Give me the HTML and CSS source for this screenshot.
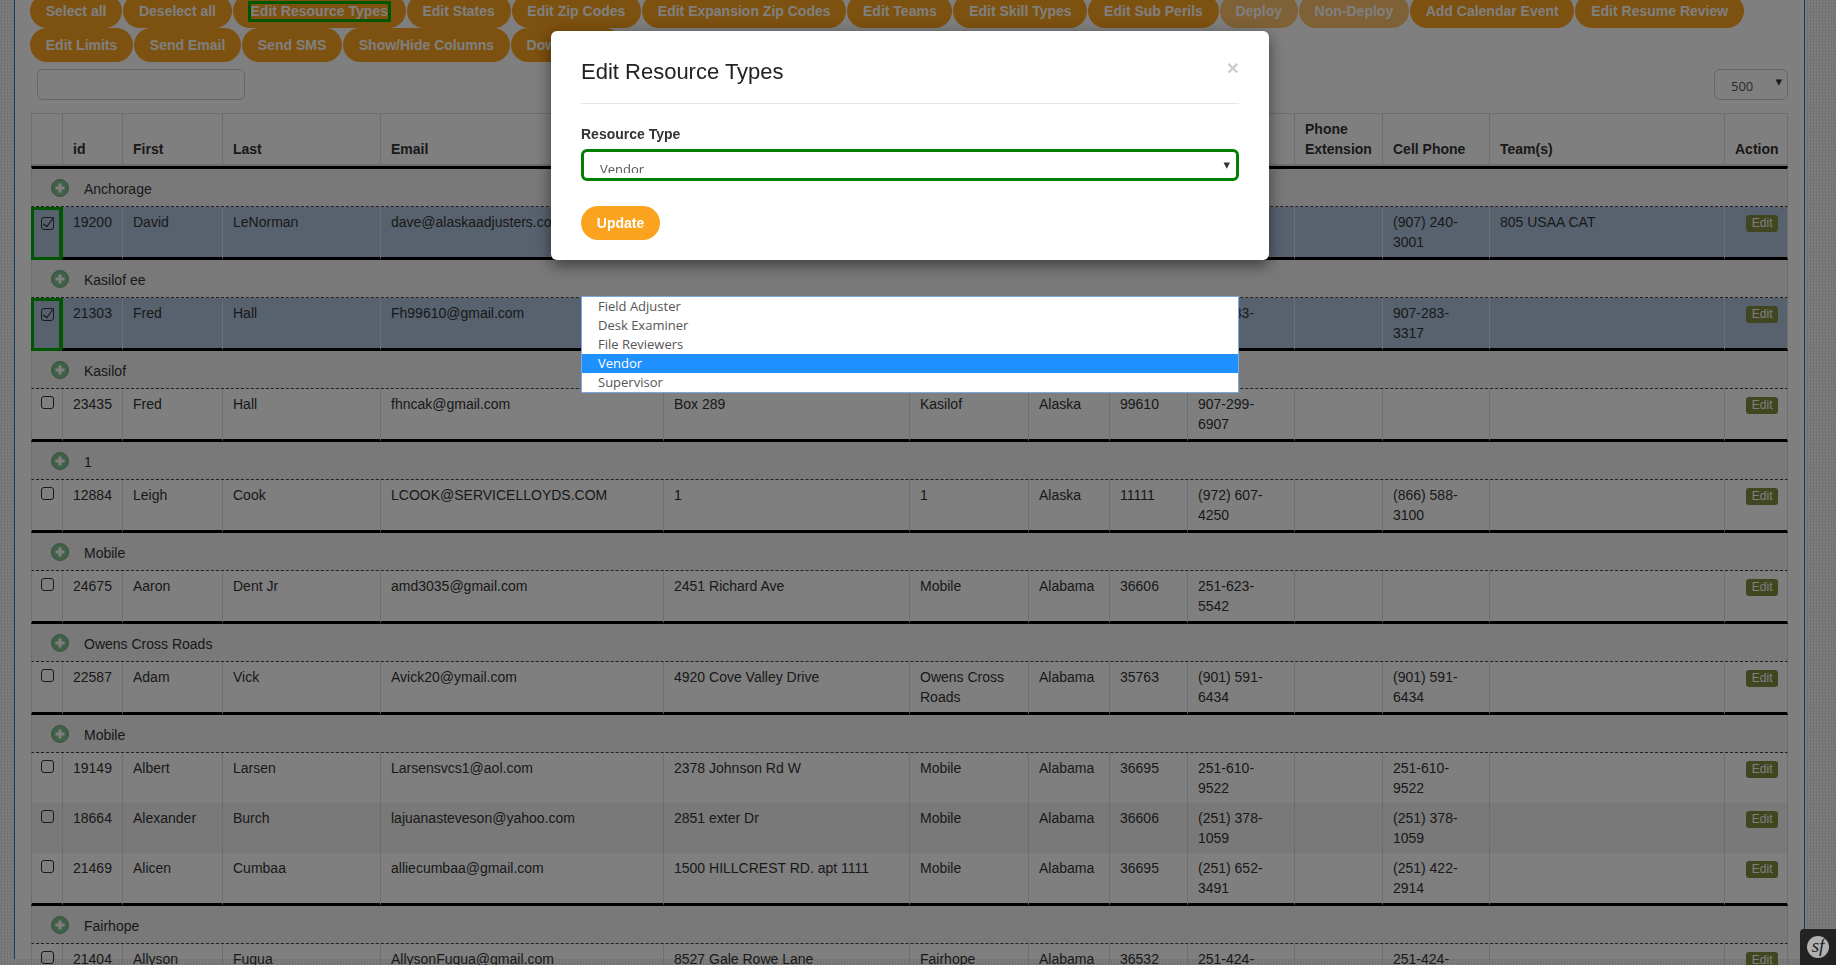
FILE: index.html
```html
<!DOCTYPE html>
<html lang="en">
<head>
    <meta charset="UTF-8">
    <meta name="viewport" content="width=device-width, initial-scale=1.0">
    <title>Resources</title>
    <link rel="stylesheet" href="styles.css">
</head>
<body>
<div class="page">
    <div class="btn-row first">
        <a class="pill">Select all</a>
        <a class="pill">Deselect all</a>
        <a class="pill"><span class="focused">Edit Resource Types</span></a>
        <a class="pill">Edit States</a>
        <a class="pill">Edit Zip Codes</a>
        <a class="pill">Edit Expansion Zip Codes</a>
        <a class="pill">Edit Teams</a>
        <a class="pill">Edit Skill Types</a>
        <a class="pill">Edit Sub Perils</a>
        <a class="pill disabled">Deploy</a>
        <a class="pill disabled">Non-Deploy</a>
        <a class="pill">Add Calendar Event</a>
        <a class="pill">Edit Resume Review</a>
    </div>
    <div class="btn-row">
        <a class="pill">Edit Limits</a>
        <a class="pill">Send Email</a>
        <a class="pill">Send SMS</a>
        <a class="pill">Show/Hide Columns</a>
        <a class="pill wide">Download</a>
    </div>

    <div class="filters">
        <input class="search" type="text">
        <div class="page-size">500<span class="arrow">&#9662;</span></div>
    </div>

    <table class="resources">
        <colgroup>
            <col class="c-check"><col class="c-id"><col class="c-first"><col class="c-last"><col class="c-email">
            <col class="c-address"><col class="c-city"><col class="c-state"><col class="c-zip"><col class="c-phone">
            <col class="c-ext"><col class="c-cell"><col class="c-teams"><col class="c-action">
        </colgroup>
        <thead>
            <tr>
                <th></th><th>id</th><th>First</th><th>Last</th><th>Email</th>
                <th>Address</th><th>City</th><th>State</th><th>Zip</th><th>Phone</th>
                <th>Phone Extension</th><th>Cell Phone</th><th>Team(s)</th><th>Action</th>
            </tr>
        </thead>
        <tbody>
            <tr class="group">
                <td colspan="14"><svg class="plus" viewBox="0 0 18 18"><circle cx="9" cy="9" r="8.5"/><path d="M9 4.5v9M4.5 9h9"/></svg>Anchorage</td>
            </tr>
            <tr class="end picked">
                <td class="check"><input class="pick" type="checkbox" checked></td>
                <td>19200</td><td>David</td><td>LeNorman</td><td>dave@alaskaadjusters.com</td>
                <td></td><td></td><td></td><td></td><td></td><td></td>
                <td>(907) 240-3001</td><td>805 USAA CAT</td><td class="action"><a class="edit">Edit</a></td>
            </tr>

            <tr class="group">
                <td colspan="14"><svg class="plus" viewBox="0 0 18 18"><circle cx="9" cy="9" r="8.5"/><path d="M9 4.5v9M4.5 9h9"/></svg>Kasilof ee</td>
            </tr>
            <tr class="end picked">
                <td class="check"><input class="pick" type="checkbox" checked></td>
                <td>21303</td><td>Fred</td><td>Hall</td><td>Fh99610@gmail.com</td>
                <td></td><td></td><td></td><td></td><td>907-283-3317</td><td></td>
                <td>907-283-3317</td><td></td><td class="action"><a class="edit">Edit</a></td>
            </tr>

            <tr class="group">
                <td colspan="14"><svg class="plus" viewBox="0 0 18 18"><circle cx="9" cy="9" r="8.5"/><path d="M9 4.5v9M4.5 9h9"/></svg>Kasilof</td>
            </tr>
            <tr class="end">
                <td class="check"><input class="pick" type="checkbox"></td>
                <td>23435</td><td>Fred</td><td>Hall</td><td>fhncak@gmail.com</td>
                <td>Box 289</td><td>Kasilof</td><td>Alaska</td><td>99610</td><td>907-299-6907</td><td></td>
                <td></td><td></td><td class="action"><a class="edit">Edit</a></td>
            </tr>

            <tr class="group">
                <td colspan="14"><svg class="plus" viewBox="0 0 18 18"><circle cx="9" cy="9" r="8.5"/><path d="M9 4.5v9M4.5 9h9"/></svg>1</td>
            </tr>
            <tr class="end">
                <td class="check"><input class="pick" type="checkbox"></td>
                <td>12884</td><td>Leigh</td><td>Cook</td><td>LCOOK@SERVICELLOYDS.COM</td>
                <td>1</td><td>1</td><td>Alaska</td><td>11111</td><td>(972) 607-4250</td><td></td>
                <td>(866) 588-3100</td><td></td><td class="action"><a class="edit">Edit</a></td>
            </tr>

            <tr class="group">
                <td colspan="14"><svg class="plus" viewBox="0 0 18 18"><circle cx="9" cy="9" r="8.5"/><path d="M9 4.5v9M4.5 9h9"/></svg>Mobile</td>
            </tr>
            <tr class="end">
                <td class="check"><input class="pick" type="checkbox"></td>
                <td>24675</td><td>Aaron</td><td>Dent Jr</td><td>amd3035@gmail.com</td>
                <td>2451 Richard Ave</td><td>Mobile</td><td>Alabama</td><td>36606</td><td>251-623-5542</td><td></td>
                <td></td><td></td><td class="action"><a class="edit">Edit</a></td>
            </tr>

            <tr class="group">
                <td colspan="14"><svg class="plus" viewBox="0 0 18 18"><circle cx="9" cy="9" r="8.5"/><path d="M9 4.5v9M4.5 9h9"/></svg>Owens Cross Roads</td>
            </tr>
            <tr class="end">
                <td class="check"><input class="pick" type="checkbox"></td>
                <td>22587</td><td>Adam</td><td>Vick</td><td>Avick20@ymail.com</td>
                <td>4920 Cove Valley Drive</td><td>Owens Cross Roads</td><td>Alabama</td><td>35763</td><td>(901) 591-6434</td><td></td>
                <td>(901) 591-6434</td><td></td><td class="action"><a class="edit">Edit</a></td>
            </tr>

            <tr class="group">
                <td colspan="14"><svg class="plus" viewBox="0 0 18 18"><circle cx="9" cy="9" r="8.5"/><path d="M9 4.5v9M4.5 9h9"/></svg>Mobile</td>
            </tr>
            <tr>
                <td class="check"><input class="pick" type="checkbox"></td>
                <td>19149</td><td>Albert</td><td>Larsen</td><td>Larsensvcs1@aol.com</td>
                <td>2378 Johnson Rd W</td><td>Mobile</td><td>Alabama</td><td>36695</td><td>251-610-9522</td><td></td>
                <td>251-610-9522</td><td></td><td class="action"><a class="edit">Edit</a></td>
            </tr>
            <tr>
                <td class="check"><input class="pick" type="checkbox"></td>
                <td>18664</td><td>Alexander</td><td>Burch</td><td>lajuanasteveson@yahoo.com</td>
                <td>2851 exter Dr</td><td>Mobile</td><td>Alabama</td><td>36606</td><td>(251) 378-1059</td><td></td>
                <td>(251) 378-1059</td><td></td><td class="action"><a class="edit">Edit</a></td>
            </tr>
            <tr class="end">
                <td class="check"><input class="pick" type="checkbox"></td>
                <td>21469</td><td>Alicen</td><td>Cumbaa</td><td>alliecumbaa@gmail.com</td>
                <td>1500 HILLCREST RD. apt 1111</td><td>Mobile</td><td>Alabama</td><td>36695</td><td>(251) 652-3491</td><td></td>
                <td>(251) 422-2914</td><td></td><td class="action"><a class="edit">Edit</a></td>
            </tr>

            <tr class="group">
                <td colspan="14"><svg class="plus" viewBox="0 0 18 18"><circle cx="9" cy="9" r="8.5"/><path d="M9 4.5v9M4.5 9h9"/></svg>Fairhope</td>
            </tr>
            <tr class="end">
                <td class="check"><input class="pick" type="checkbox"></td>
                <td>21404</td><td>Allyson</td><td>Fugua</td><td>AllysonFugua@gmail.com</td>
                <td>8527 Gale Rowe Lane</td><td>Fairhope</td><td>Alabama</td><td>36532</td><td>251-424-0000</td><td></td>
                <td>251-424-0000</td><td></td><td class="action"><a class="edit">Edit</a></td>
            </tr>
        </tbody>
    </table>
</div>

<div class="backdrop"></div>

<div class="modal">
    <div class="modal-head">
        <h4>Edit Resource Types</h4>
        <span class="close">&times;</span>
    </div>
    <label class="field-label">Resource Type</label>
    <div class="fake-select">
        <span class="fake-value">Vendor</span>
        <span class="arrow">&#9662;</span>
    </div>
    <button class="update" type="button">Update</button>
</div>

<ul class="dropdown">
    <li>Field Adjuster</li>
    <li>Desk Examiner</li>
    <li>File Reviewers</li>
    <li class="active">Vendor</li>
    <li>Supervisor</li>
</ul>

<div class="sf-toolbar"><span class="sf-logo">sf</span></div>
</body>
</html>
```

FILE: styles.css
```css
html, body {
    height: 100%;
    overflow: hidden;
}

body {
    margin: 0;
    padding: 0 31px 0 14px;
    box-sizing: border-box;
    height: 965px;
    font-family: "Liberation Sans", Arial, sans-serif;
    font-size: 14px;
    line-height: 20px;
    color: #333;
    background-color: #f6f6f6;
    background-image: repeating-conic-gradient(#e4e4e4 0 25%, #ffffff 0 50%);
    background-size: 3px 3px;
}

.page {
    height: 965px;
    padding: 0 16px;
    background-color: #fff;
    border-left: 1px solid #337ab7;
    border-right: 1px solid #337ab7;
}

/* toolbar buttons */
.btn-row {
    display: flex;
    gap: 1px;
    margin-left: -1px;
    white-space: nowrap;
}

.btn-row.first {
    margin-top: -6px;
}

.pill {
    display: block;
    height: 34px;
    line-height: 34px;
    padding: 0 15.75px;
    border-radius: 17px;
    background-color: #fba31f;
    color: #fff;
    font-weight: bold;
}

.pill.disabled {
    opacity: 0.65;
}

.pill.wide {
    padding-right: 29px;
}

.focused {
    display: inline-block;
    margin: 0 2px;
    padding-bottom: 1px;
    line-height: 14px;
    outline: 3px solid #00aa00;
}

.filters {
    display: flex;
    justify-content: space-between;
    margin-top: 7px;
    padding-left: 6px;
}

.search {
    width: 208px;
    height: 31px;
    box-sizing: border-box;
    border: 1px solid #ccc;
    border-radius: 6px;
    background: none;
}

.page-size {
    width: 74px;
    height: 31px;
    box-sizing: border-box;
    padding: 6px 0 0 16px;
    border: 1px solid #ccc;
    border-radius: 6px;
    font-family: "Open Sans", sans-serif;
    font-size: 13px;
    color: #555;
    display: flex;
    justify-content: space-between;
}

.arrow {
    font-family: "DejaVu Sans", sans-serif;
    font-size: 13px;
    line-height: 13px;
    margin: -1px 5px 0 0;
    color: #333;
}

/* table */
.resources {
    table-layout: fixed;
    width: 1757px;
    margin-top: 13px;
    border-collapse: separate;
    border-spacing: 0;
}

.c-check { width: 31px; }
.c-id { width: 60px; }
.c-first { width: 100px; }
.c-last { width: 158px; }
.c-email { width: 283px; }
.c-address { width: 246px; }
.c-city { width: 119px; }
.c-state { width: 81px; }
.c-zip { width: 78px; }
.c-phone { width: 107px; }
.c-ext { width: 88px; }
.c-cell { width: 107px; }
.c-teams { width: 235px; }
.c-action { width: 64px; }

.resources th {
    padding: 5px 10px;
    text-align: left;
    vertical-align: bottom;
    border-top: 1px solid #ddd;
    border-left: 1px solid #ddd;
    border-bottom: 2px solid #ddd;
}

.resources th:last-child {
    border-right: 1px solid #ddd;
}

.resources td {
    padding: 5px 10px;
    vertical-align: top;
    border-left: 1px solid #ddd;
}

.resources td:last-child {
    border-right: 1px solid #ddd;
}

.resources tbody tr:nth-child(odd) td {
    background-color: #f2f2f2;
}

.resources tbody tr:first-child td {
    border-top: 3px solid #000;
}

.resources tbody tr.group td {
    padding: 10px 10px 7px 18px;
    border-bottom: 1px dashed #444;
}

.resources tr.end td {
    border-bottom: 3px solid #000;
}

.resources tr.picked td {
    background-color: #b0c4de;
}

.resources tr.picked .check {
    outline: 3px solid #00aa00;
    outline-offset: -3px;
}

.resources tr.picked .check + td {
    border-left-color: #00aa00;
}

.plus {
    width: 18px;
    height: 18px;
    margin: -4px 15px 0 1px;
    vertical-align: middle;
}

.plus circle {
    fill: #80c090;
    stroke: #70a080;
}

.plus path {
    stroke: #fff;
    stroke-width: 3;
    fill: none;
}

.resources td.check {
    padding-left: 9px;
}

.pick {
    appearance: none;
    position: relative;
    display: block;
    width: 13px;
    height: 13px;
    margin: 2px 0 0 0;
    border: 1px solid #333;
    border-radius: 3px;
    background: none;
}

.pick:checked {
    margin-top: 5px;
}

.pick:checked::after {
    content: "";
    position: absolute;
    left: 4px;
    top: -3px;
    width: 4px;
    height: 11px;
    border-right: 1.5px solid #222;
    border-bottom: 1.5px solid #222;
    transform: rotate(36deg);
}

.resources td.action {
    text-align: right;
    padding-right: 9px;
}

.edit {
    display: inline-block;
    margin-top: 3px;
    padding: 0 5.5px;
    height: 17px;
    line-height: 17px;
    font-size: 12px;
    border-radius: 3px;
    background-color: #808c3e;
    color: #fff;
}

/* modal */
.backdrop {
    position: fixed;
    top: 0;
    left: 0;
    right: 0;
    bottom: 0;
    background-color: rgba(0, 0, 0, 0.5);
}

.modal {
    position: absolute;
    left: 551px;
    top: 31px;
    width: 718px;
    height: 229px;
    box-sizing: border-box;
    padding: 0 30px;
    background-color: #fff;
    border-radius: 6px;
    box-shadow: 0 5px 15px rgba(0, 0, 0, 0.5);
}

.modal-head {
    display: flex;
    justify-content: space-between;
    height: 72px;
    border-bottom: 1px solid #e5e5e5;
}

.modal-head h4 {
    margin: 26px 0 0;
    font-size: 22px;
    line-height: 30px;
    font-weight: normal;
    color: #222;
}

.close {
    margin: 25px 0 0;
    font-size: 21px;
    line-height: 24px;
    font-weight: bold;
    color: #ccc;
}

.field-label {
    display: block;
    margin-top: 20px;
    font-weight: bold;
    line-height: 20px;
}

.fake-select {
    display: flex;
    justify-content: space-between;
    height: 32px;
    box-sizing: border-box;
    margin-top: 5px;
    padding: 0 1px 0 16px;
    border: 3px solid #008000;
    border-radius: 6px;
    font-family: "Open Sans", sans-serif;
    font-size: 13px;
    color: #555;
}

/* the closed select cuts its value off at the bottom */
.fake-value {
    display: block;
    height: 21px;
    box-sizing: border-box;
    padding-top: 7px;
    overflow: hidden;
}

.fake-select .arrow {
    margin-top: 6px;
}

.update {
    display: block;
    width: 79px;
    height: 34px;
    margin-top: 25px;
    padding: 0;
    border: none;
    border-radius: 17px;
    background-color: #fba31f;
    color: #fff;
    font-family: inherit;
    font-size: 14px;
    font-weight: bold;
}

.dropdown {
    position: absolute;
    left: 581px;
    top: 296px;
    width: 658px;
    box-sizing: border-box;
    margin: 0;
    padding: 0;
    list-style: none;
    background-color: #fff;
    border: 1px solid #7ea6e0;
    font-family: "Open Sans", sans-serif;
    font-size: 13px;
    color: #555;
}

.dropdown li {
    height: 19px;
    line-height: 19px;
    padding-left: 16px;
}

.dropdown li.active {
    background-color: #1e90ff;
    color: #fff;
}

/* debug toolbar corner */
.sf-toolbar {
    position: absolute;
    right: 0;
    bottom: 0;
    width: 36px;
    height: 36px;
    display: flex;
    align-items: center;
    justify-content: center;
    background-color: #222;
    border-top-left-radius: 4px;
}

.sf-logo {
    width: 22px;
    height: 22px;
    border-radius: 50%;
    overflow: hidden;
    background-color: #b0b0b0;
    color: #222;
    font-family: "Liberation Serif", serif;
    font-style: italic;
    font-size: 19px;
    line-height: 20px;
    text-align: center;
}
```
